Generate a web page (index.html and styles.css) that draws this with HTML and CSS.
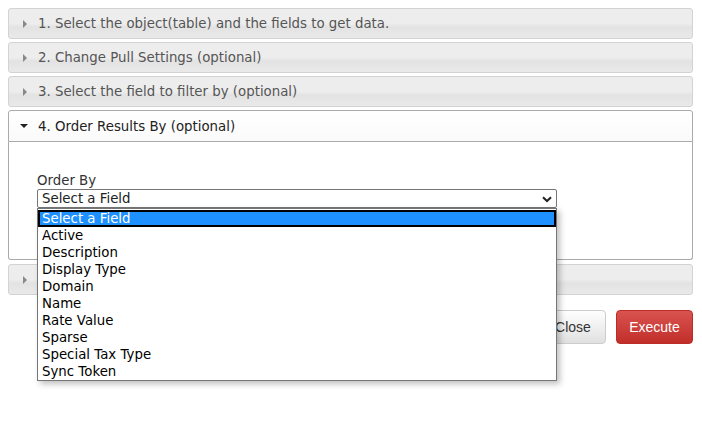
FILE: index.html
```html
<!DOCTYPE html>
<html>
<head>
<meta charset="utf-8">
<link rel="stylesheet" href="styles.css">
</head>
<body>
<div class="accordion">
  <div class="hdr"><span class="tri tri-r"></span>1. Select the object(table) and the fields to get data.</div>
  <div class="hdr"><span class="tri tri-r"></span>2. Change Pull Settings (optional)</div>
  <div class="hdr"><span class="tri tri-r"></span>3. Select the field to filter by (optional)</div>
  <div class="hdr active"><span class="tri tri-d"></span>4. Order Results By (optional)</div>
  <div class="content">
    <div class="field">
      <div class="label">Order By</div>
      <div class="select">
        <span>Select a Field</span>
        <svg class="chev" width="10" height="7" viewBox="0 0 10 7"><path d="M1 1.2 L5 5 L9 1.2" fill="none" stroke="#222" stroke-width="2"/></svg>
        <div class="list">
          <div class="opt sel">Select a Field</div>
          <div class="opt">Active</div>
          <div class="opt">Description</div>
          <div class="opt">Display Type</div>
          <div class="opt">Domain</div>
          <div class="opt">Name</div>
          <div class="opt">Rate Value</div>
          <div class="opt">Sparse</div>
          <div class="opt">Special Tax Type</div>
          <div class="opt">Sync Token</div>
        </div>
      </div>
    </div>
  </div>
  <div class="hdr last"><span class="tri tri-r"></span></div>
</div>
<div class="footer">
  <button class="btn btn-default">Close</button>
  <button class="btn btn-danger">Execute</button>
</div>
</body>
</html>
```
FILE: styles.css
```css
html, body { margin: 0; padding: 0; background: #fff; }
html { height: 100%; }
body { min-height: 100%; box-sizing: border-box; padding: 8px 9px 0 8px; font-family: "DejaVu Sans", Verdana, sans-serif; }
.accordion { display: flex; flex-direction: column; }
.hdr {
  height: 29px;
  margin-top: 3px;
  border: 1px solid #d3d3d3;
  border-radius: 3px;
  background: linear-gradient(to bottom, #ededed 0%, #ededed 50%, #e3e3e3 62%, #e9e9e9 100%);
  color: #555;
  font-size: 13.33px;
  display: flex;
  align-items: center;
  padding-left: 11px;
  box-sizing: content-box;
}
.hdr:first-child { margin-top: 0; }
.hdr.active {
  margin-top: 3px;
  background: linear-gradient(to bottom, #fff 0%, #fafafa 100%);
  border-color: #aaa;
  border-radius: 3px 3px 0 0;
  color: #222;
  height: 30px;
}
.hdr.last { margin-top: 4px; }
.tri { display: inline-block; width: 0; height: 0; }
.tri-r { border-top: 4px solid transparent; border-bottom: 4px solid transparent; border-left: 4px solid #888; margin-left: 3px; margin-right: 11px; }
.tri-d { border-left: 4px solid transparent; border-right: 4px solid transparent; border-top: 4px solid #222; margin-left: 0; margin-right: 10px; }
.content {
  border: 1px solid #aaa;
  border-top: none;
  border-radius: 0 0 3px 3px;
  height: 118px;
  padding: 30px 0 0 28px;
  box-sizing: border-box;
}
.field { width: 520px; }
.label { font-size: 13.33px; color: #333; height: 17px; line-height: 17px; }
.select {
  position: relative;
  height: 19px;
  border: 1px solid #767676;
  border-radius: 2px;
  box-sizing: border-box;
  background: #fff;
  font-size: 13.33px;
  color: #222;
  line-height: 18px;
  padding-left: 4px;
}
.chev { position: absolute; right: 4px; top: 6px; }
.list {
  position: absolute;
  left: -1px;
  top: 18px;
  width: 520px;
  height: 173px;
  box-sizing: border-box;
  border: 1px solid #767676;
  background: #fff;
  box-shadow: 3px 3px 6px rgba(0,0,0,0.25);
  z-index: 5;
  padding-top: 1px;
}
.opt { height: 17px; line-height: 17px; padding-left: 4px; font-size: 13.33px; color: #000; }
.opt.sel {
  background: #1e90ff;
  color: #fff;
  outline: 2px solid #000;
  outline-offset: -2px;
}
.footer { display: flex; justify-content: flex-end; gap: 10px; margin-top: 15px; }
.btn {
  font-family: "Liberation Sans", Arial, sans-serif;
  font-size: 14px;
  height: 34px;
  border-radius: 4px;
  padding: 0 12px;
}
.btn-default {
  background: linear-gradient(to bottom, #fff 0%, #e0e0e0 100%);
  border: 1px solid #ccc;
  color: #333;
  width: 66px;
}
.btn-danger {
  background: linear-gradient(to bottom, #d9534f 0%, #c12e2a 100%);
  border: 1px solid #b92c28;
  color: #fff;
  width: 77px;
}
```
